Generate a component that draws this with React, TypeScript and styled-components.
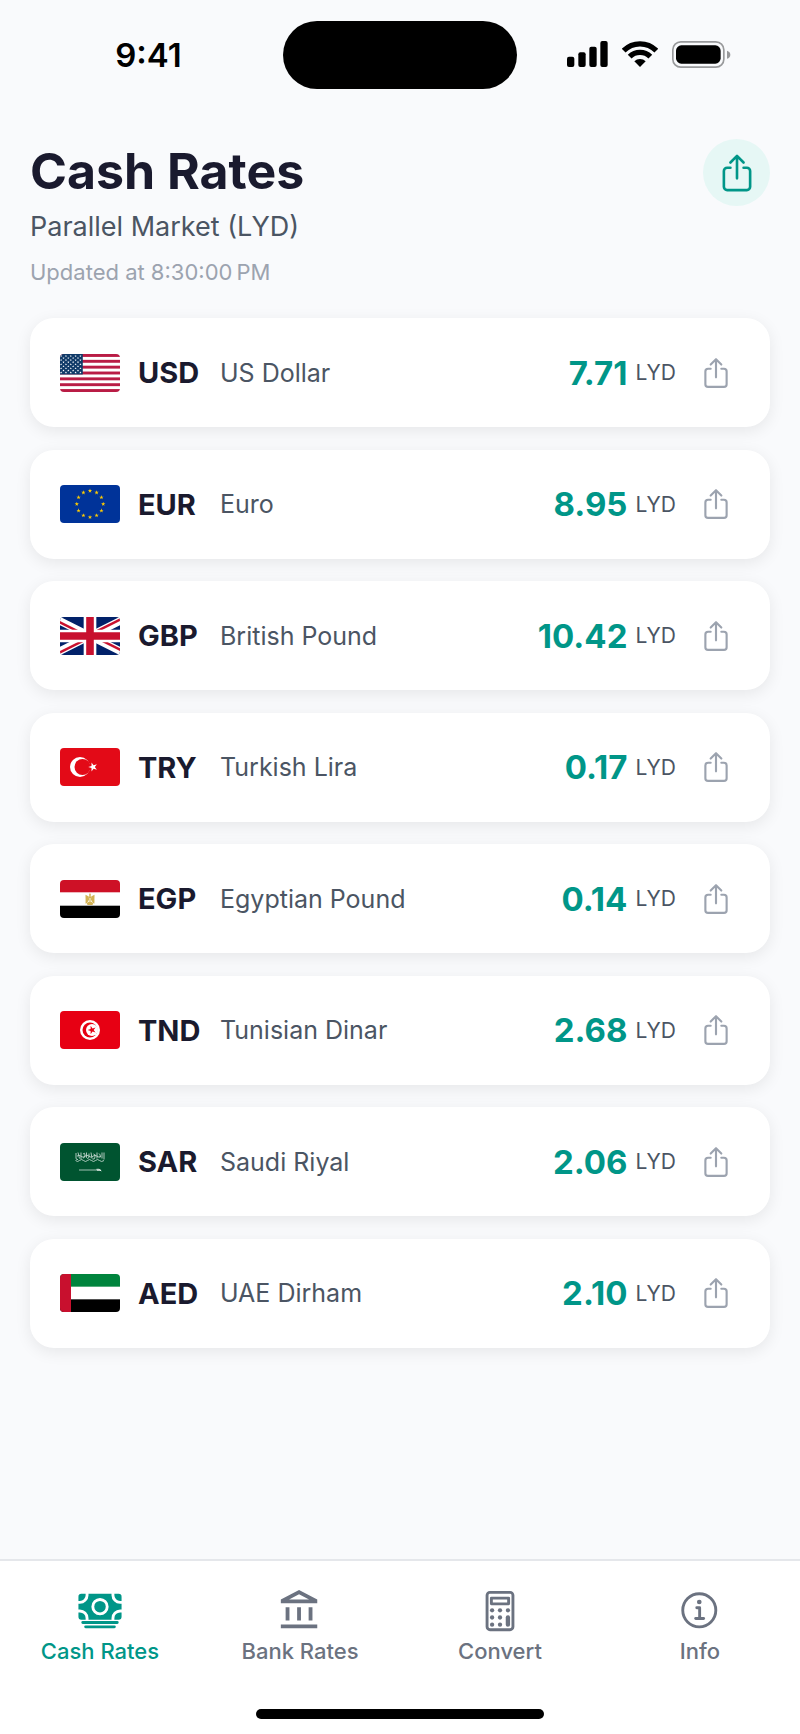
import { FC, ReactNode, useState } from "react";
import styled, { createGlobalStyle, ThemeProvider } from "styled-components";
import type { IconType } from "react-icons";
import {
  IoCalculatorOutline,
  IoCash,
  IoInformationCircleOutline,
  IoShareOutline,
} from "react-icons/io5";
import { MdOutlineAccountBalance } from "react-icons/md";

const theme = {
  bg: "#f9fafc",
  surface: "#ffffff",
  ink: "#1a1a2e",
  text: "#4b5563",
  tab: "#6b7280",
  muted: "#9ca3af",
  line: "#e5e7eb",
  primary: "#009688",
  primarySoft: "#e6f7f5",
};

type Theme = typeof theme;

declare module "styled-components" {
  export interface DefaultTheme extends Theme {}
}

const GlobalStyle = createGlobalStyle`
  *, *::before, *::after {
    box-sizing: border-box;
  }

  body {
    margin: 0;
    background: ${({ theme }) => theme.bg};
    font-family: Inter, "Liberation Sans", sans-serif;
  }

  h1, p, ul {
    margin: 0;
    padding: 0;
  }

  button {
    border: 0;
    padding: 0;
    background: none;
    font: inherit;
    cursor: pointer;
  }
`;

const Screen = styled.div`
  display: flex;
  flex-direction: column;
  min-height: 100vh;
`;

/* status bar */

const StatusBar = styled.div`
  display: grid;
  grid-template-columns: 1fr 234px 1fr;
  align-items: center;
  padding-top: 21px;
`;

const Time = styled.span`
  padding-left: 14px;
  text-align: center;
  font-size: 33px;
  line-height: 40px;
  font-weight: 600;
  color: #000;
`;

const Island = styled.div`
  height: 68px;
  border-radius: 34px;
  background: #000;
`;

const Indicators = styled.div`
  display: flex;
  justify-content: center;
  align-items: center;
  gap: 14px;
  padding: 0 20px 2px 0;
`;

const StatusIcons: FC = () => (
  <Indicators>
    <svg width="41" height="26" viewBox="0 0 123 78" aria-hidden="true">
      <rect x="0" y="47" width="22" height="31" rx="6" />
      <rect x="34" y="34" width="22" height="44" rx="6" />
      <rect x="67" y="17" width="22" height="61" rx="6" />
      <rect x="100" y="0" width="22" height="78" rx="6" />
    </svg>
    <svg width="36" height="26" viewBox="0 0 108 78" aria-hidden="true">
      <g fill="none" stroke="#000" strokeWidth="16">
        <path d="M5 29A69 69 0 0 1 103 29" />
        <path d="M23 47A44 44 0 0 1 85 47" />
      </g>
      <path d="M54 78L37 61A24 24 0 0 1 71 61Z" />
    </svg>
    <svg width="59" height="27" viewBox="0 0 177 81" aria-hidden="true">
      <rect
        x="2.5"
        y="2.5"
        width="153"
        height="76"
        rx="24"
        fill="none"
        stroke="#98999b"
        strokeWidth="5"
      />
      <rect x="12" y="13" width="134" height="55" rx="16" />
      <path d="M165 29Q175 32 175 41Q175 50 165 53Z" fill="#98999b" />
    </svg>
  </Indicators>
);

/* header */

const Header = styled.header`
  display: flex;
  justify-content: space-between;
  align-items: flex-start;
  padding: 50px 30px 0;
`;

const Title = styled.h1`
  font-size: 50px;
  line-height: 64px;
  font-weight: 700;
  color: ${({ theme }) => theme.ink};
`;

const Subtitle = styled.p`
  font-size: 27px;
  line-height: 48px;
  color: ${({ theme }) => theme.text};
`;

const Updated = styled.p`
  font-size: 22px;
  line-height: 42px;
  color: ${({ theme }) => theme.muted};
`;

const ShareAll = styled.button`
  display: flex;
  justify-content: center;
  align-items: center;
  width: 67px;
  height: 67px;
  border-radius: 50%;
  background: ${({ theme }) => theme.primarySoft};
  color: ${({ theme }) => theme.primary};
`;

/* flags, each cropped to the same box */

const FlagSvg = styled.svg`
  flex: none;
  width: 60px;
  height: 38px;
  border-radius: 4px;
`;

interface FlagProps {
  viewBox: string;
  children: ReactNode;
}

const Flag: FC<FlagProps> = ({ viewBox, children }) => (
  <FlagSvg
    viewBox={viewBox}
    preserveAspectRatio="xMidYMid slice"
    aria-hidden="true"
  >
    {children}
  </FlagSvg>
);

const starPoints = (cx: number, cy: number, r: number, turn = -90) =>
  Array.from({ length: 10 }, (_, i) => {
    const radius = i % 2 ? r * 0.382 : r;
    const angle = ((turn + i * 36) * Math.PI) / 180;
    return `${cx + radius * Math.cos(angle)},${cy + radius * Math.sin(angle)}`;
  }).join(" ");

const usStars = Array.from({ length: 9 }, (_, row) =>
  Array.from({ length: row % 2 ? 5 : 6 }, (_, col) => ({
    x: 6.3 + col * 12.7 + (row % 2 ? 6.3 : 0),
    y: 5.4 + row * 5.4,
  }))
).flat();

const UsFlag = () => (
  <Flag viewBox="0 0 190 100">
    <rect width="190" height="100" fill="#fff" />
    {[0, 1, 2, 3, 4, 5, 6].map((i) => (
      <rect key={i} y={i * 15.385} width="190" height="7.69" fill="#b91c45" />
    ))}
    <rect width="76" height="53.85" fill="#0f3a68" />
    {usStars.map(({ x, y }) => (
      <polygon key={`${x}-${y}`} points={starPoints(x, y, 3.2)} fill="#fff" />
    ))}
  </Flag>
);

const EuFlag = () => (
  <Flag viewBox="0 0 60 40">
    <rect width="60" height="40" fill="#039" />
    {Array.from({ length: 12 }, (_, i) => {
      const angle = (i * Math.PI) / 6;
      return (
        <polygon
          key={i}
          points={starPoints(
            30 + 13.2 * Math.cos(angle),
            20 + 13.2 * Math.sin(angle),
            2.3
          )}
          fill="#fc0"
        />
      );
    })}
  </Flag>
);

const UkFlag = () => (
  <Flag viewBox="0 0 60 30">
    <clipPath id="uk-saltire">
      <path d="M30 15h30v15zv15H0zH0V0zV0h30z" />
    </clipPath>
    <rect width="60" height="30" fill="#012169" />
    <path d="M0 0L60 30M60 0L0 30" stroke="#fff" strokeWidth="6" />
    <path
      d="M0 0L60 30M60 0L0 30"
      clipPath="url(#uk-saltire)"
      stroke="#c8102e"
      strokeWidth="4"
    />
    <path d="M30 0v30M0 15h60" stroke="#fff" strokeWidth="10" />
    <path d="M30 0v30M0 15h60" stroke="#c8102e" strokeWidth="6" />
  </Flag>
);

const TrFlag = () => (
  <Flag viewBox="0 0 60 40">
    <rect width="60" height="40" fill="#e30a17" />
    <circle cx="20" cy="20" r="10" fill="#fff" />
    <circle cx="22.5" cy="20" r="8" fill="#e30a17" />
    <polygon points={starPoints(33, 20, 4.8, 180)} fill="#fff" />
  </Flag>
);

const EgFlag = () => (
  <Flag viewBox="0 0 60 40">
    <rect width="60" height="40" fill="#fff" />
    <rect width="60" height="13.3" fill="#ce1126" />
    <rect y="26.7" width="60" height="13.3" fill="#000" />
    <g fill="#d3b254">
      <path d="M25.5 15.8L28.8 17.6L29 20.5L27.4 23.6L25.6 24.8Z" />
      <path d="M34.5 15.8L31.2 17.6L31 20.5L32.6 23.6L34.4 24.8Z" />
      <path d="M29.2 15L30 14.2L30.8 15L30.7 17.2L31.6 20L31 22.6H29L28.4 20L29.3 17.2Z" />
      <path d="M26.6 24.6L28.6 22.8H31.4L33.4 24.6L32.4 26.1H27.6Z" />
    </g>
    <path d="M29.4 19h1.2v3h-1.2z" fill="#fff" opacity="0.7" />
  </Flag>
);

const TnFlag = () => (
  <Flag viewBox="0 0 60 40">
    <rect width="60" height="40" fill="#e70013" />
    <circle cx="30" cy="20" r="10" fill="#fff" />
    <circle cx="30" cy="20" r="7.5" fill="#e70013" />
    <circle cx="32" cy="20" r="6" fill="#fff" />
    <polygon points={starPoints(32, 20, 4.4, 180)} fill="#e70013" />
  </Flag>
);

const SaFlag = () => (
  <Flag viewBox="0 0 60 40">
    <rect width="60" height="40" fill="#005430" />
    <g fill="none" stroke="#fff" strokeWidth="0.9" opacity="0.75">
      <path d="M16 11v5q0 2 2 1.5M18 10.5l1.5 6M21 10.5v6.5M23 12q2-2 2 1t-2 3M26.5 10.5v5q1 2 2.5 0v-4M31 10.5l1 6M33.5 12q2 0 1.500 3t-2.5 2M37 10.5v6M39 11.5q2 1 1 4M42 10.5v6M44 10.5v7" />
      <path d="M15.5 18.5q2 2 4 0t4 0t4 0t4 0t4 0t4 0t4.5 0M17 14.2q2-2 4 0t4 0t4 0t4 0t4 0t4 0" />
    </g>
    <path d="M19 28h18" stroke="#fff" strokeWidth="0.8" opacity="0.8" />
    <path
      d="M36.5 27.3q3-.8 4.8 1.6M37 28.3h4"
      stroke="#fff"
      strokeWidth="0.9"
      fill="none"
    />
  </Flag>
);

const AeFlag = () => (
  <Flag viewBox="0 0 60 30">
    <rect width="60" height="30" fill="#fff" />
    <rect width="60" height="10" fill="#00843d" />
    <rect y="20" width="60" height="10" fill="#000" />
    <rect width="15" height="30" fill="#c8102e" />
  </Flag>
);

/* rates */

const RateList = styled.ul`
  display: flex;
  flex: 1;
  flex-direction: column;
  justify-content: space-between;
  gap: 16px;
  padding: 25px 30px 211px;
  list-style: none;
`;

const Card = styled.li`
  display: flex;
  align-items: center;
  min-height: 109px;
  padding: 24px 30px;
  border-radius: 24px;
  background: ${({ theme }) => theme.surface};
  box-shadow: 0 4px 16px rgba(0, 0, 0, 0.08);
`;

const Code = styled.span`
  width: 82px;
  margin-left: 18px;
  font-size: 29px;
  font-weight: 700;
  color: ${({ theme }) => theme.ink};
`;

const Name = styled.span`
  flex: 1;
  font-size: 25px;
  color: ${({ theme }) => theme.text};
`;

const Amount = styled.span`
  display: flex;
  align-items: center;
  gap: 8px;
`;

const Value = styled.span`
  font-size: 33px;
  font-weight: 700;
  color: ${({ theme }) => theme.primary};
`;

const Unit = styled.span`
  font-size: 21px;
  color: ${({ theme }) => theme.text};
`;

const ShareOne = styled.button`
  display: flex;
  margin-left: 16px;
  padding: 7px;
  color: ${({ theme }) => theme.muted};
`;

interface Rate {
  code: string;
  name: string;
  value: string;
  flag: FC;
}

const rates: Rate[] = [
  { code: "USD", name: "US Dollar", value: "7.71", flag: UsFlag },
  { code: "EUR", name: "Euro", value: "8.95", flag: EuFlag },
  { code: "GBP", name: "British Pound", value: "10.42", flag: UkFlag },
  { code: "TRY", name: "Turkish Lira", value: "0.17", flag: TrFlag },
  { code: "EGP", name: "Egyptian Pound", value: "0.14", flag: EgFlag },
  { code: "TND", name: "Tunisian Dinar", value: "2.68", flag: TnFlag },
  { code: "SAR", name: "Saudi Riyal", value: "2.06", flag: SaFlag },
  { code: "AED", name: "UAE Dirham", value: "2.10", flag: AeFlag },
];

const RateCard: FC<Rate> = ({ code, name, value, flag: FlagIcon }) => (
  <Card>
    <FlagIcon />
    <Code>{code}</Code>
    <Name>{name}</Name>
    <Amount>
      <Value>{value}</Value>
      <Unit>LYD</Unit>
    </Amount>
    <ShareOne type="button" aria-label={`Share ${code}`}>
      <IoShareOutline size={34} />
    </ShareOne>
  </Card>
);

/* tab bar */

const TabBar = styled.footer`
  padding-bottom: 15px;
  border-top: 2px solid ${({ theme }) => theme.line};
  background: ${({ theme }) => theme.surface};
`;

const Tabs = styled.nav`
  display: grid;
  grid-template-columns: repeat(4, 1fr);
  padding: 27px 0 43px;
`;

const Tab = styled.button<{ $active: boolean }>`
  display: flex;
  flex-direction: column;
  align-items: center;
  gap: 2px;
  font-size: 22px;
  line-height: 30px;
  font-weight: 500;
  color: ${({ theme, $active }) => ($active ? theme.primary : theme.tab)};
`;

const HomeIndicator = styled.div`
  width: 36%;
  height: 10px;
  margin: 0 auto;
  border-radius: 5px;
  background: #000;
`;

const tabs: { label: string; icon: IconType }[] = [
  { label: "Cash Rates", icon: IoCash },
  { label: "Bank Rates", icon: MdOutlineAccountBalance },
  { label: "Convert", icon: IoCalculatorOutline },
  { label: "Info", icon: IoInformationCircleOutline },
];

const App: FC = () => {
  const [current, setCurrent] = useState("Cash Rates");

  return (
    <ThemeProvider theme={theme}>
      <GlobalStyle />
      <Screen>
        <StatusBar>
          <Time>9:41</Time>
          <Island />
          <StatusIcons />
        </StatusBar>

        <Header>
          <div>
            <Title>Cash Rates</Title>
            <Subtitle>Parallel Market (LYD)</Subtitle>
            <Updated>Updated at 8:30:00{"\u202f"}PM</Updated>
          </div>
          <ShareAll type="button" aria-label="Share all rates">
            <IoShareOutline size={42} />
          </ShareAll>
        </Header>

        <RateList>
          {rates.map((rate) => (
            <RateCard key={rate.code} {...rate} />
          ))}
        </RateList>

        <TabBar>
          <Tabs>
            {tabs.map(({ label, icon: Icon }) => (
              <Tab
                key={label}
                type="button"
                $active={label === current}
                onClick={() => setCurrent(label)}
              >
                <Icon size={46} />
                {label}
              </Tab>
            ))}
          </Tabs>
          <HomeIndicator />
        </TabBar>
      </Screen>
    </ThemeProvider>
  );
};

export default App;
